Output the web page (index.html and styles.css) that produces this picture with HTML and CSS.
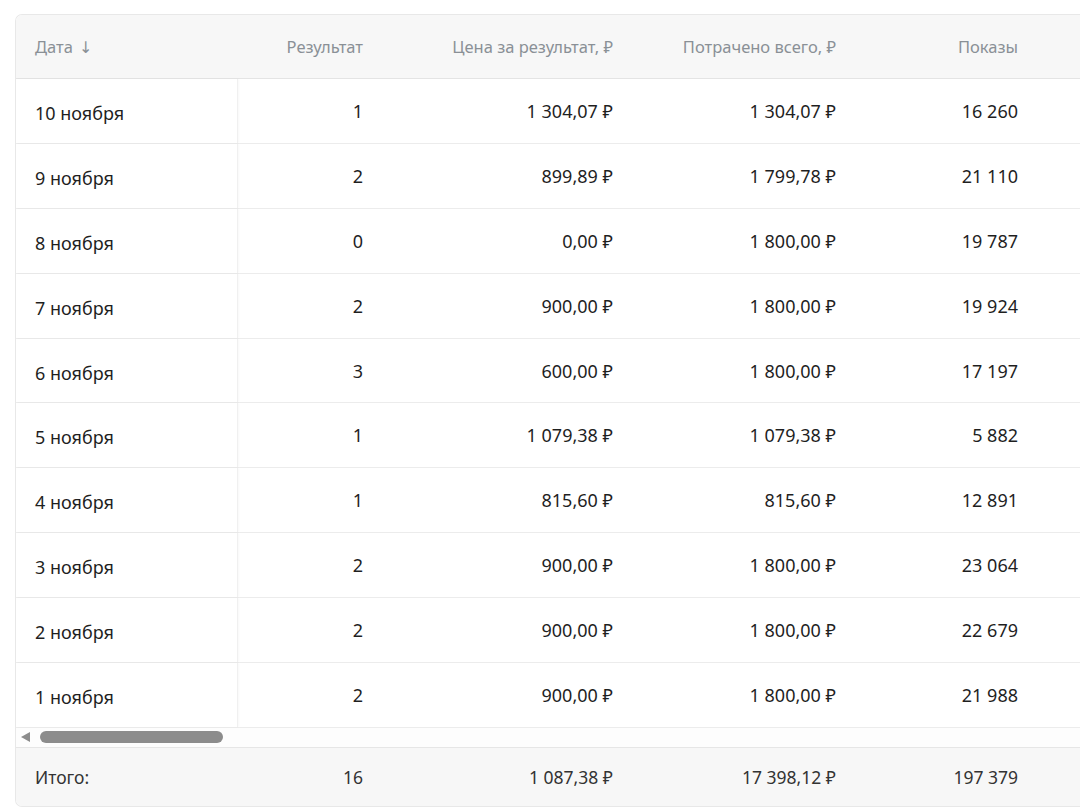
FILE: index.html
```html
<!DOCTYPE html>
<html lang="ru">
<head>
<meta charset="utf-8">
<title>Статистика</title>
<link rel="stylesheet" href="styles.css">
</head>
<body>
<div class="card">
  <div class="row head">
    <div class="cell date">Дата <span class="arrow">↓</span></div>
    <div class="cell">Результат</div>
    <div class="cell">Цена за результат, ₽</div>
    <div class="cell">Потрачено всего, ₽</div>
    <div class="cell">Показы</div>
    <div class="cell"></div>
  </div>
  <div class="row body"><div class="cell date">10 ноября</div><div class="cell">1</div><div class="cell">1 304,07 ₽</div><div class="cell">1 304,07 ₽</div><div class="cell">16 260</div><div class="cell"></div></div>
  <div class="row body"><div class="cell date">9 ноября</div><div class="cell">2</div><div class="cell">899,89 ₽</div><div class="cell">1 799,78 ₽</div><div class="cell">21 110</div><div class="cell"></div></div>
  <div class="row body"><div class="cell date">8 ноября</div><div class="cell">0</div><div class="cell">0,00 ₽</div><div class="cell">1 800,00 ₽</div><div class="cell">19 787</div><div class="cell"></div></div>
  <div class="row body"><div class="cell date">7 ноября</div><div class="cell">2</div><div class="cell">900,00 ₽</div><div class="cell">1 800,00 ₽</div><div class="cell">19 924</div><div class="cell"></div></div>
  <div class="row body"><div class="cell date">6 ноября</div><div class="cell">3</div><div class="cell">600,00 ₽</div><div class="cell">1 800,00 ₽</div><div class="cell">17 197</div><div class="cell"></div></div>
  <div class="row body"><div class="cell date">5 ноября</div><div class="cell">1</div><div class="cell">1 079,38 ₽</div><div class="cell">1 079,38 ₽</div><div class="cell">5 882</div><div class="cell"></div></div>
  <div class="row body"><div class="cell date">4 ноября</div><div class="cell">1</div><div class="cell">815,60 ₽</div><div class="cell">815,60 ₽</div><div class="cell">12 891</div><div class="cell"></div></div>
  <div class="row body"><div class="cell date">3 ноября</div><div class="cell">2</div><div class="cell">900,00 ₽</div><div class="cell">1 800,00 ₽</div><div class="cell">23 064</div><div class="cell"></div></div>
  <div class="row body"><div class="cell date">2 ноября</div><div class="cell">2</div><div class="cell">900,00 ₽</div><div class="cell">1 800,00 ₽</div><div class="cell">22 679</div><div class="cell"></div></div>
  <div class="row body"><div class="cell date">1 ноября</div><div class="cell">2</div><div class="cell">900,00 ₽</div><div class="cell">1 800,00 ₽</div><div class="cell">21 988</div><div class="cell"></div></div>
  <div class="scrollbar">
    <span class="sb-arrow"></span>
    <span class="sb-thumb"></span>
  </div>
  <div class="row foot">
    <div class="cell date">Итого:</div>
    <div class="cell">16</div>
    <div class="cell">1 087,38 ₽</div>
    <div class="cell">17 398,12 ₽</div>
    <div class="cell">197 379</div>
    <div class="cell"></div>
  </div>
</div>
</body>
</html>
```
FILE: styles.css
```css
html, body {
  margin: 0;
  padding: 0;
  background: #ffffff;
  overflow: hidden;
}
body {
  padding: 14px 0 0 15px;
  font-family: "Noto Sans", "Open Sans", "DejaVu Sans", sans-serif;
  font-size: 18px;
  color: #1f1f1f;
}
.card {
  width: 1200px;
  border: 1px solid #e8e8e8;
  border-right: none;
  border-radius: 7px 0 0 7px;
  overflow: hidden;
  background: #ffffff;
}
.row {
  display: grid;
  grid-template-columns: 222px 145px 250px 223px 182px 178px;
  box-sizing: border-box;
}
.cell {
  display: flex;
  align-items: center;
  justify-content: flex-end;
  padding-right: 20px;
}
.cell.date {
  justify-content: flex-start;
  padding-left: 19px;
  padding-right: 0;
  border-right: 1px solid #f0f0f0;
  box-shadow: 1px 0 2px rgba(0, 0, 0, 0.03);
}
.head {
  height: 64px;
  background: #f7f7f7;
  border-bottom: 1px solid #e4e4e4;
  color: #8a9096;
  font-size: 16.5px;
}
.head .cell.date {
  border-right: none;
  box-shadow: none;
}
.arrow {
  margin-left: 6px;
  font-size: 16px;
}
.body {
  height: 64.9px;
  border-bottom: 1px solid #ececec;
}
.body .cell.date {
  padding-top: 4px;
}
.scrollbar {
  height: 20px;
  box-sizing: border-box;
  display: flex;
  align-items: center;
  padding-left: 5px;
  background: #fdfdfd;
  border-bottom: 1px solid #e6e6e6;
}
.sb-arrow {
  width: 0;
  height: 0;
  border-top: 5px solid transparent;
  border-bottom: 5px solid transparent;
  border-right: 9px solid #8c8c8c;
}
.sb-thumb {
  margin-left: 10px;
  width: 183px;
  height: 12px;
  border-radius: 6px;
  background: #8c8c8c;
}
.foot {
  height: 58px;
  background: #f7f7f7;
  color: #333333;
  font-size: 17.5px;
}
.foot .cell.date {
  border-right: none;
  box-shadow: none;
}
```
